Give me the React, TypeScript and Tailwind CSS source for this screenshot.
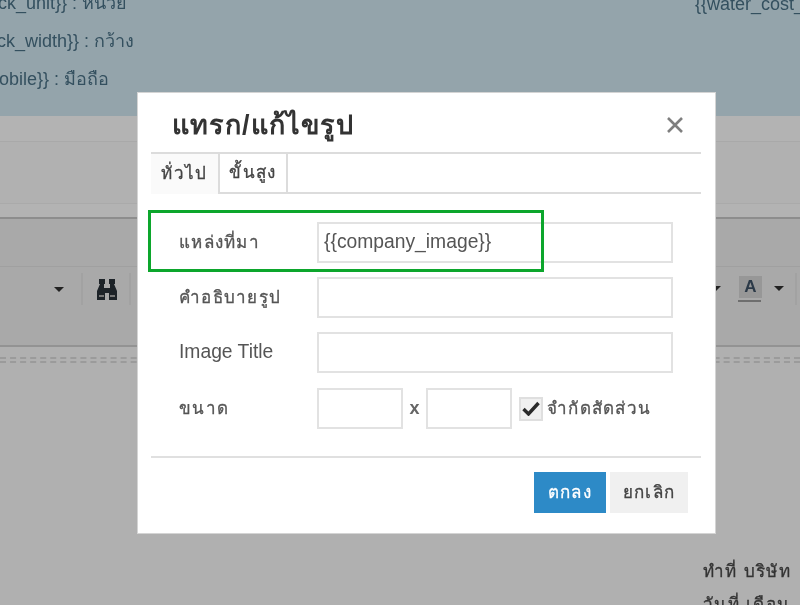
const thai = "font-['Liberation_Sans','Noto_Sans','Noto_Sans_CJK_SC',sans-serif]";
const thaiText = "text-[17px] tracking-[1.3px] [-webkit-text-stroke:0.3px_currentColor]";

function Row({ label, className = "", value, latin }: { label: string; className?: string; value?: string; latin?: boolean }) {
  return (
    <div className={`flex items-center ${className}`}>
      <label className={`w-[179px] pl-[41px] text-[#555] ${latin ? "text-[19.3px]" : thaiText}`}>{label}</label>
      <div className="h-[41px] w-[356px] border-2 border-[#e2e2e2] bg-white pl-[5px] text-[19.3px] leading-[35px] text-[#555]">{value}</div>
    </div>
  );
}

function Caret() {
  return <span className="h-0 w-0 border-x-[5px] border-t-[5px] border-x-transparent border-t-[#222]" />;
}

function Sep() {
  return <span className="block h-[32px] w-[2px] bg-[#a2a2a2]" />;
}

export default function App() {
  return (
    <div className={`relative h-[605px] w-[800px] overflow-hidden bg-[#b0b0b0] ${thai}`}>
      <div className="blur-[0.6px]">
        <header className="flex h-[116px] justify-between bg-[#94a4ab] text-[18px] text-[#34505f]">
          <div className="-mt-[6px] flex w-[134px] flex-col items-end gap-[19px] whitespace-nowrap leading-[19px]">
            <p className="mr-[7px]">{"{{stock_unit}} : หน่วย"}</p>
            <p>{"{{stock_width}} : กว้าง"}</p>
            <p className="mr-[25px]">{"{{mobile}} : มือถือ"}</p>
          </div>
          <p className="-mt-[5px] w-[105px] overflow-hidden whitespace-nowrap leading-[19px]">{"{{water_cost_rate}}"}</p>
        </header>
        <div className="h-[26px] border-b border-[#a9a9a9] bg-[#b3b3b3]" />
        <div className="h-[62px] border-b border-[#aaaaaa] bg-[#b1b1b1]" />
        <div className="h-[15px] border-b-2 border-[#8d8d8d] bg-[#b3b3b3]" />
        <div className="h-[48px] border-b border-[#a0a0a0] bg-[#a9a9a9]" />
        <div className="flex h-[80px] items-center border-b-2 border-[#939393] bg-[#a9a9a9] pb-[34px] pl-[54px]">
          <Caret />
          <span className="ml-[17px]"><Sep /></span>
        </div>
        <div className="mt-[10px] h-[6px] border-y-2 border-dashed border-[#9b9b9b]" />
        <p className={`ml-[703px] mt-[198px] whitespace-nowrap leading-[22px] text-[#333] ${thaiText}`}>ทำที่ บริษัท</p>
        <p className={`ml-[703px] mt-[11px] whitespace-nowrap leading-[22px] text-[#333] ${thaiText}`}>วันที่ เดือน</p>
      </div>

      <svg className="absolute left-[96px] top-[278px] blur-[0.4px]" width="22" height="24" viewBox="0 0 22 24" aria-hidden="true">
        <path fill="#1d2328" d="M3 1h6v5H8v4h6V6h-1V1h6v5h-1l3 7v9h-8v-7h-4v7H1v-9l3-7H3z" />
        <rect x="3" y="17" width="5" height="2" fill="#777" />
        <rect x="14" y="17" width="5" height="2" fill="#777" />
      </svg>
      <span className="absolute left-[129px] top-[273px] h-[32px] w-[2px] bg-[#a2a2a2]" />
      <span className="absolute left-[711px] top-[286px] h-0 w-0 border-x-[5px] border-t-[5px] border-x-transparent border-t-[#222]" />
      <div className="absolute left-[739px] top-[276px] flex h-[22px] w-[23px] items-center justify-center bg-[#979797] text-[17px] font-bold text-[#2c3a48] blur-[0.4px]">A</div>
      <span className="absolute left-[738px] top-[300px] h-[2px] w-[23px] bg-[#6e6e6e]" />
      <span className="absolute left-[774px] top-[286px] h-0 w-0 border-x-[5px] border-t-[5px] border-x-transparent border-t-[#222]" />
      <span className="absolute left-[795px] top-[273px] h-[32px] w-[2px] bg-[#a2a2a2]" />

      <div className="absolute left-[137px] top-[92px] h-[442px] w-[579px] border border-[#d4d4d4] bg-white blur-[0.5px]">
        <div className="flex h-[59px] items-center justify-between pl-[34px] pr-[30px] pt-[4px]">
          <h1 className="text-[27px] font-bold leading-[36px] tracking-[1px] text-[#333]">แทรก/แก้ไขรูป</h1>
          <svg width="20" height="20" viewBox="0 0 20 20" aria-hidden="true">
            <path d="M3 3l14 14M17 3L3 17" stroke="#7f7f7f" strokeWidth="2.6" />
          </svg>
        </div>
        <div className={`ml-[13px] mr-[14px] flex h-[42px] border-t-2 border-[#dcdcdc] text-[#444] ${thaiText}`}>
          <div className="flex w-[69px] items-center justify-center border-r-2 border-[#dcdcdc] bg-[#fafafa]">ทั่วไป</div>
          <div className="flex w-[68px] items-center justify-center border-b-2 border-r-2 border-[#dcdcdc]">ขั้นสูง</div>
          <div className="flex-1 border-b-2 border-[#dcdcdc]" />
        </div>
        <div className="pt-[28px]">
          <Row label="แหล่งที่มา" value="{{company_image}}" />
          <Row label="คำอธิบายรูป" className="mt-[14px]" />
          <Row label="Image Title" latin className="mt-[14px]" />
          <div className="mt-[15px] flex items-center">
            <label className={`w-[179px] pl-[41px] text-[#555] ${thaiText}`}>ขนาด</label>
            <div className="h-[41px] w-[86px] border-2 border-[#e2e2e2]" />
            <span className="w-[23px] text-center text-[18px] font-bold text-[#666]">x</span>
            <div className="h-[41px] w-[86px] border-2 border-[#e2e2e2]" />
            <div className="ml-[7px] flex h-[24px] w-[24px] items-center justify-center border-2 border-[#dfdfdf] bg-[#f0f0f0]">
              <svg width="18" height="15" viewBox="0 0 18 15" aria-hidden="true">
                <path d="M1.5 8l5 5L16.5 2" fill="none" stroke="#2a2a2a" strokeWidth="3.4" />
              </svg>
            </div>
            <span className={`ml-[4px] whitespace-nowrap text-[#555] ${thaiText}`}>จำกัดสัดส่วน</span>
          </div>
        </div>
        <div className="ml-[13px] mr-[14px] mt-[27px] flex h-[59px] justify-end gap-[4px] border-t-2 border-[#e0e0e0] pr-[13px] pt-[14px]">
          <button className={`h-[41px] w-[72px] bg-[#2d8ac7] text-white ${thaiText}`}>ตกลง</button>
          <button className={`h-[41px] w-[78px] bg-[#f0f0f0] text-[#444] ${thaiText}`}>ยกเลิก</button>
        </div>
      </div>

      <div className="absolute left-[148px] top-[210px] h-[62px] w-[396px] border-[3px] border-[#0ca62c]" />
    </div>
  );
}
